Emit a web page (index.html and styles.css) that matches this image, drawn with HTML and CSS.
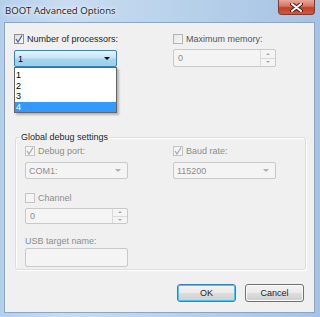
FILE: index.html
```html
<!DOCTYPE html>
<html lang="en">
<head>
    <meta charset="UTF-8">
    <title>BOOT Advanced Options</title>
    <link rel="stylesheet" href="styles.css">
</head>
<body>
    <div class="window">
        <div class="titlebar">
            <span class="title">BOOT Advanced Options</span>
            <div class="close">
                <svg width="13" height="9" viewBox="0 0 13 9">
                    <path d="M2 1 L11 8 M11 1 L2 8" stroke="#4a1a12" stroke-width="4" stroke-linecap="round"/>
                    <path d="M2 1 L11 8 M11 1 L2 8" stroke="#fff" stroke-width="2" stroke-linecap="round"/>
                </svg>
            </div>
        </div>
        <div class="client">
            <div class="top-row">
                <div class="col">
                    <div class="check">
                        <span class="box checked"><svg width="8" height="8" viewBox="0 0 8 8"><path d="M1 4 L3 7 L7 0.5" fill="none" stroke="#4c61a0" stroke-width="1.3"/></svg></span>
                        <span>Number of processors:</span>
                    </div>
                    <div class="combo active">
                        <span>1</span>
                        <span class="arrow"></span>
                    </div>
                </div>
                <div class="col">
                    <div class="check">
                        <span class="box"></span>
                        <span>Maximum memory:</span>
                    </div>
                    <div class="spin disabled">
                        <span>0</span>
                        <div class="spin-btns">
                            <span class="up"></span>
                            <span class="down"></span>
                        </div>
                    </div>
                </div>
                <ul class="droplist">
                    <li>1</li>
                    <li>2</li>
                    <li>3</li>
                    <li class="selected">4</li>
                </ul>
            </div>

            <fieldset class="group">
                <legend>Global debug settings</legend>
                <div class="group-row">
                    <div class="col">
                        <div class="check disabled">
                            <span class="box checked"><svg width="8" height="8" viewBox="0 0 8 8"><path d="M1 4 L3 7 L7 0.5" fill="none" stroke="#a8a8a8" stroke-width="1.2"/></svg></span>
                            <span>Debug port:</span>
                        </div>
                        <div class="combo disabled">
                            <span>COM1:</span>
                            <span class="arrow"></span>
                        </div>
                    </div>
                    <div class="col">
                        <div class="check disabled">
                            <span class="box checked"><svg width="8" height="8" viewBox="0 0 8 8"><path d="M1 4 L3 7 L7 0.5" fill="none" stroke="#a8a8a8" stroke-width="1.2"/></svg></span>
                            <span>Baud rate:</span>
                        </div>
                        <div class="combo disabled">
                            <span>115200</span>
                            <span class="arrow"></span>
                        </div>
                    </div>
                </div>
                <div class="col channel">
                    <div class="check disabled">
                        <span class="box"></span>
                        <span>Channel</span>
                    </div>
                    <div class="spin disabled short">
                        <span>0</span>
                        <div class="spin-btns">
                            <span class="up"></span>
                            <span class="down"></span>
                        </div>
                    </div>
                </div>
                <div class="col usb">
                    <div class="label disabled">USB target name:</div>
                    <div class="textbox disabled"></div>
                </div>
            </fieldset>

            <div class="buttons">
                <button class="btn default">OK</button>
                <button class="btn">Cancel</button>
            </div>
        </div>
    </div>
</body>
</html>
```

FILE: styles.css
```css
/* Windows 7 style dialog */
body {
    margin: 0;
    padding: 0;
    font-family: "Liberation Sans", Arial, sans-serif;
    font-size: 9px;
    color: #1e1e1e;
}
.window {
    width: 320px;
    height: 317px;
    box-sizing: border-box;
    padding: 0 5px 4px 4px;
    background: linear-gradient(90deg, #b4cfec 0%, #c9dcf1 20%, #b7d0ea 60%, #a6c3e4 100%);
    display: flex;
    flex-direction: column;
}
.titlebar {
    height: 22px;
    display: flex;
    align-items: flex-start;
    justify-content: space-between;
}
.title {
    font-family: "Open Sans", sans-serif;
    font-size: 9.6px;
    color: #1b1b1b;
    margin: 4px 0 0 1px;
    text-shadow: 0 0 6px #fff, 0 0 3px #fff;
}
.close {
    width: 37px;
    height: 15px;
    box-sizing: border-box;
    border: 1px solid #7a3a30;
    border-top: none;
    border-radius: 0 0 4px 4px;
    background: linear-gradient(180deg, #e8a898 0%, #d7745f 45%, #c2402a 55%, #cf5a3f 100%);
    display: flex;
    align-items: center;
    justify-content: center;
}
.client {
    flex: 1;
    position: relative;
    background: #f0f0f0;
    border: 1px solid #8ca5c1;
    padding: 11px 0 0 9px;
}
.top-row {
    display: flex;
    gap: 56px;
    height: 98px;
}
.col {
    width: 103px;
}
.check {
    display: flex;
    align-items: center;
    height: 10px;
    gap: 3px;
    white-space: nowrap;
}
.box {
    flex: none;
    width: 10px;
    height: 10px;
    box-sizing: border-box;
    border: 1px solid #8f8f8f;
    background: linear-gradient(135deg, #dcdcdc, #fbfbfb);
    display: flex;
    align-items: center;
    justify-content: center;
}
.check.disabled,
.label.disabled {
    color: #8d8d8d;
}
.check.disabled .box {
    border-color: #c4c4c4;
    background: #f4f4f4;
}
.top-row .col:nth-child(2) .box {
    border-color: #b4b4b4;
    background: linear-gradient(135deg, #e4e4e4, #f8f8f8);
}
.top-row .col:nth-child(2) .check {
    color: #555;
}
.combo {
    margin-top: 6px;
    height: 17px;
    box-sizing: border-box;
    border: 1px solid #b8b8b8;
    border-radius: 2px;
    display: flex;
    align-items: center;
    justify-content: space-between;
    padding: 0 6px 0 3px;
}
.combo.active {
    border-color: #3c7fb1;
    background: linear-gradient(180deg, #e3f4fc 0%, #c4e5f6 45%, #a4d4ef 55%, #9bcfec 100%);
    color: #000;
}
.combo.disabled {
    background: #f4f4f4;
    border-color: #c9c9c9;
    color: #8d8d8d;
}
.arrow {
    width: 0;
    height: 0;
    border-left: 3px solid transparent;
    border-right: 3px solid transparent;
    border-top: 3px solid #000;
}
.combo.disabled .arrow {
    border-top-color: #b0b0b0;
}
.spin {
    margin-top: 5px;
    height: 18px;
    box-sizing: border-box;
    border: 1px solid #c9c9c9;
    border-radius: 2px;
    background: #f4f4f4;
    color: #8d8d8d;
    display: flex;
    align-items: center;
    justify-content: space-between;
    padding-left: 4px;
}
.spin.short {
    height: 16px;
}
.spin-btns {
    width: 14px;
    height: 100%;
    display: flex;
    flex-direction: column;
    border-left: 1px solid #dadada;
}
.spin-btns span {
    flex: 1;
    display: flex;
    align-items: center;
    justify-content: center;
}
.spin-btns .up {
    border-bottom: 1px solid #dadada;
}
.spin-btns .up::after,
.spin-btns .down::after {
    content: "";
    border-left: 2px solid transparent;
    border-right: 2px solid transparent;
}
.spin-btns .up::after {
    border-bottom: 2px solid #a8a8a8;
}
.spin-btns .down::after {
    border-top: 2px solid #a8a8a8;
}
.droplist {
    position: absolute;
    left: 9px;
    top: 44px;
    width: 103px;
    margin: 0;
    padding: 2px 0 0 0;
    list-style: none;
    box-sizing: border-box;
    background: #fff;
    border: 1px solid #646464;
    box-shadow: 2px 2px 2px rgba(0, 0, 0, 0.25);
    color: #000;
}
.droplist li {
    height: 10.5px;
    line-height: 10.5px;
    padding-left: 1px;
}
.droplist li.selected {
    background: #3399ff;
    color: #fff;
}
.group {
    width: 291px;
    height: 138px;
    box-sizing: border-box;
    margin: 0 0 0 1px;
    padding: 4px 0 0 9px;
    border: 1px solid #d5dfe5;
    border-radius: 3px;
    box-shadow: inset 1px 1px 0 #fff, 1px 1px 0 #fff;
}
.group legend {
    padding: 0 1px;
    margin-left: -5px;
    color: #1e1e1e;
}
.group-row {
    display: flex;
    gap: 45px;
}
.channel {
    margin-top: 14px;
}
.usb {
    margin-top: 12px;
}
.label {
    height: 10px;
    line-height: 10px;
}
.textbox {
    margin-top: 2px;
    height: 19px;
    box-sizing: border-box;
    border: 1px solid #c9c9c9;
    border-radius: 2px;
    background: #f4f4f4;
}
.buttons {
    display: flex;
    justify-content: flex-end;
    gap: 9px;
    margin: 14px 10px 0 0;
}
.btn {
    width: 59px;
    height: 18px;
    font: inherit;
    color: #1e1e1e;
    border: 1px solid #707070;
    border-radius: 3px;
    background: linear-gradient(180deg, #f2f2f2 0%, #ebebeb 48%, #dddddd 52%, #cfcfcf 100%);
    box-shadow: inset 0 0 0 1px #fbfbfb;
    padding: 0;
}
.btn.default {
    border-color: #3c7fb1;
    box-shadow: inset 0 0 0 1px #48c4f7;
}
```
